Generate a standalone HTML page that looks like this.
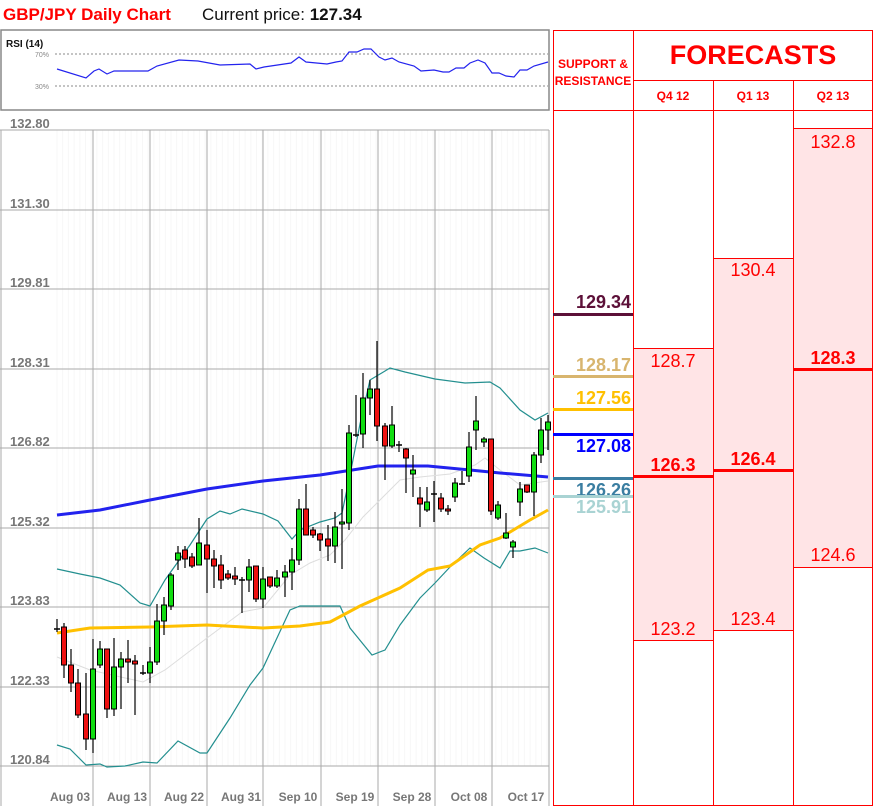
<!DOCTYPE html>
<html><head><meta charset="utf-8"><style>
body{margin:0;width:873px;height:806px;overflow:hidden;background:#fff;font-family:"Liberation Sans",sans-serif;position:relative}
.a{position:absolute}
.pk{position:absolute;background:#ffe4e6;border-top:1px solid #f00;border-bottom:1px solid #f00}
.num{position:absolute;width:80px;text-align:center;color:#f00;font-size:18px}
.b{font-weight:bold}
.ln{position:absolute;height:3px;background:#f00}
.sr{position:absolute;left:553px;width:80px;height:3px}
.srt{position:absolute;left:553px;width:78px;text-align:right;font-size:18px;font-weight:bold}
</style></head><body>
<div class="a" style="left:3px;top:5px;font-size:17px;font-weight:bold;color:#f00">GBP/JPY Daily Chart</div>
<div class="a" style="left:202px;top:5px;font-size:17px;color:#111">Current price: <b>127.34</b></div>
<svg class="a" style="left:0;top:0" width="553" height="806">
<rect x="1" y="30" width="548" height="80" fill="none" stroke="#888" stroke-width="1.5"/>
<text x="6" y="47" font-size="10" font-weight="bold" fill="#111" font-family="Liberation Sans">RSI (14)</text>
<line x1="55" y1="54" x2="548" y2="54" stroke="#888" stroke-dasharray="2,2"/>
<line x1="55" y1="86" x2="548" y2="86" stroke="#888" stroke-dasharray="2,2"/>
<text x="35" y="57" font-size="7" fill="#888">70%</text>
<text x="35" y="89" font-size="7" fill="#888">30%</text>
<polyline fill="none" stroke="#2323ee" stroke-width="1.2" points="57,69 86,78 94,71 99,69 107,74 114,71 148,71 157,66 179,60 198,61 220,65 250,64 256,69 264,67 291,63 299,57 306,62 327,64 336,62 342,61 349,52 357,52 364,49 371,49 379,57 385,60 392,58 399,62 414,66 421,71 434,70 443,72 449,72 456,68 464,68 470,63 478,60 485,63 492,73 499,73 506,76 514,77 520,70 527,70 534,66 548,62"/>
<g id="minor"></g>
<g stroke="#aaa" stroke-width="1">
<line x1="1" y1="130" x2="1" y2="806"/>
<line x1="549" y1="130" x2="549" y2="806"/>
<line x1="93" y1="130" x2="93" y2="806"/><line x1="150" y1="130" x2="150" y2="806"/><line x1="207" y1="130" x2="207" y2="806"/><line x1="263" y1="130" x2="263" y2="806"/><line x1="321" y1="130" x2="321" y2="806"/><line x1="378" y1="130" x2="378" y2="806"/><line x1="435" y1="130" x2="435" y2="806"/><line x1="492" y1="130" x2="492" y2="806"/>
<line x1="0" y1="130" x2="549" y2="130"/><line x1="0" y1="210" x2="549" y2="210"/><line x1="0" y1="289" x2="549" y2="289"/><line x1="0" y1="369" x2="549" y2="369"/><line x1="0" y1="448" x2="549" y2="448"/><line x1="0" y1="528" x2="549" y2="528"/><line x1="0" y1="607" x2="549" y2="607"/><line x1="0" y1="687" x2="549" y2="687"/><line x1="0" y1="766" x2="549" y2="766"/>
</g>
<g font-size="13" font-weight="bold" fill="#777" font-family="Liberation Sans">
<text x="10" y="128">132.80</text><text x="10" y="208">131.30</text><text x="10" y="287">129.81</text><text x="10" y="367">128.31</text><text x="10" y="446">126.82</text><text x="10" y="526">125.32</text><text x="10" y="605">123.83</text><text x="10" y="685">122.33</text><text x="10" y="764">120.84</text>
</g>
<g font-size="12" font-weight="bold" fill="#777" text-anchor="middle" font-family="Liberation Sans">
<text x="70" y="801">Aug 03</text><text x="127" y="801">Aug 13</text><text x="184" y="801">Aug 22</text><text x="241" y="801">Aug 31</text><text x="298" y="801">Sep 10</text><text x="355" y="801">Sep 19</text><text x="412" y="801">Sep 28</text><text x="469" y="801">Oct 08</text><text x="526" y="801">Oct 17</text>
</g>
<polyline fill="none" stroke="#ddd" stroke-width="1" points="57,657 90,670 143,682 165,670 207,638 242,612 263,608 290,575 310,563 330,555 345,540 363,517 400,480 420,477 450,474 475,465 485,458 500,470 520,485 548,481"/>
<polyline fill="none" stroke="#238f8f" stroke-width="1.2" points="57,569 80,574 100,578 120,585 140,603 150,606 165,580 190,545 207,519 220,511 230,514 242,509 263,514 278,521 292,539 300,530 320,522 335,518 342,513 350,475 360,424 370,380 390,368 405,372 435,379 465,383 490,382 500,388 520,410 535,420 548,413"/>
<polyline fill="none" stroke="#238f8f" stroke-width="1.2" points="57,745 70,749 86,765 100,764 107,767 125,766 143,762 157,763 178,741 200,753 207,753 230,718 250,685 263,668 290,610 300,606 340,606 350,628 372,655 385,650 400,625 420,598 435,583 450,567 470,548 484,558 500,568 510,551 520,551 535,548 548,553"/>
<polyline fill="none" stroke="#ffc000" stroke-width="3" points="57,633 90,628 150,627 207,625 263,628 300,626 330,622 360,606 400,588 428,570 450,566 480,545 500,538 530,520 548,510"/>
<polyline fill="none" stroke="#2222ee" stroke-width="3" points="57,515 100,510 150,500 207,489 263,481 320,475 378,466 428,466 470,470 500,473 548,477"/>
<g id="c"></g>
</svg>
<script>
var d=[[57,629,629,619,632],[64,627,665,623,678],[71,665,683,649,692],[78,683,715,669,718],[86,714,739,673,750],[93,739,669,639,753],[100,665,649,641,668],[107,649,709,649,718],[114,709,667,638,716],[121,667,659,652,709],[128,659,662,640,683],[135,661,664,655,715],[143,673,673,665,675],[150,673,662,647,683],[157,662,621,604,665],[164,621,605,597,635],[171,606,575,573,610],[178,560,553,546,570],[185,550,559,546,568],[192,557,566,553,568],[199,565,543,518,565],[207,545,559,530,593],[214,559,566,550,588],[221,565,580,555,589],[228,574,578,570,580],[235,576,579,567,585],[242,580,580,577,613],[249,580,567,559,592],[256,566,599,566,602],[263,599,579,567,608],[270,577,586,577,588],[277,586,578,570,588],[285,577,572,565,597],[292,572,560,548,590],[299,560,509,499,565],[306,509,535,484,535],[313,530,535,527,538],[320,534,540,533,551],[328,539,546,525,561],[335,546,527,512,563],[342,524,522,489,569],[349,523,433,425,530],[356,436,435,395,437],[363,434,398,373,448],[370,398,389,380,415],[377,389,426,341,441],[385,426,446,423,480],[392,446,425,406,448],[399,445,445,441,452],[406,449,458,448,493],[413,474,470,455,497],[420,498,504,487,527],[427,510,502,487,512],[434,494,495,481,522],[441,498,509,493,512],[448,509,511,505,515],[455,497,483,478,502],[462,484,484,471,484],[469,476,447,432,482],[476,430,421,396,450],[484,442,439,437,447],[491,439,511,439,515],[498,518,505,501,520],[506,538,533,513,539],[513,547,542,540,558],[520,502,489,482,516],[527,485,492,485,493],[534,492,455,452,516],[541,455,430,418,463],[548,430,422,415,450]];
var s='';
for(var i=57;i<549;i+=5.7){s+='<line x1="'+i+'" y1="130" x2="'+i+'" y2="766" stroke="#f7f7f7"/>';}
document.getElementById('minor').innerHTML=s;
s='';
d.forEach(function(c){var x=c[0],o=c[1],cl=c[2];s+='<line x1="'+x+'" y1="'+c[3]+'" x2="'+x+'" y2="'+c[4]+'" stroke="#000" stroke-width="1.2"/>';
var t=Math.min(o,cl),h=Math.abs(o-cl);
if(h<1.5){s+='<line x1="'+(x-3)+'" y1="'+t+'" x2="'+(x+3)+'" y2="'+t+'" stroke="#000" stroke-width="1.5"/>';}
else s+='<rect x="'+(x-2.5)+'" y="'+t+'" width="5" height="'+h+'" fill="'+(cl<o?'#11dd11':'#ee1111')+'" stroke="#000" stroke-width="1"/>';});
document.getElementById('c').innerHTML=s;
</script>
<div class="pk" style="left:633px;top:348px;width:80px;height:291px"></div>
<div class="pk" style="left:713px;top:258px;width:80px;height:371px"></div>
<div class="pk" style="left:793px;top:128px;width:80px;height:438px"></div>
<div class="a" style="left:553px;top:30px;width:318px;height:774px;border:1px solid #f00"></div>
<div class="a" style="left:633px;top:30px;width:1px;height:776px;background:#f00"></div>
<div class="a" style="left:713px;top:80px;width:1px;height:726px;background:#f00"></div>
<div class="a" style="left:793px;top:80px;width:1px;height:726px;background:#f00"></div>
<div class="a" style="left:633px;top:80px;width:240px;height:1px;background:#f00"></div>
<div class="a" style="left:553px;top:110px;width:320px;height:1px;background:#f00"></div>
<div class="a b" style="left:633px;top:40px;width:240px;text-align:center;font-size:27px;color:#f00">FORECASTS</div>
<div class="a b" style="left:553px;top:56px;width:80px;text-align:center;font-size:12px;line-height:17px;color:#f00">SUPPORT &amp;<br>RESISTANCE</div>
<div class="a b" style="left:633px;top:89px;width:80px;text-align:center;font-size:12px;color:#f00">Q4 12</div>
<div class="a b" style="left:713px;top:89px;width:80px;text-align:center;font-size:12px;color:#f00">Q1 13</div>
<div class="a b" style="left:793px;top:89px;width:80px;text-align:center;font-size:12px;color:#f00">Q2 13</div>

<div class="sr" style="top:313px;background:#5c1038"></div><div class="srt" style="top:292px;color:#5c1038">129.34</div>
<div class="sr" style="top:375px;background:#d8b56e"></div><div class="srt" style="top:355px;color:#d8b56e">128.17</div>
<div class="sr" style="top:408px;background:#ffc000"></div><div class="srt" style="top:388px;color:#ffc000">127.56</div>
<div class="sr" style="top:433px;background:#0000ff"></div><div class="srt" style="top:436px;color:#0000ff">127.08</div>
<div class="sr" style="top:477px;background:#3b7ea1"></div><div class="srt" style="top:480px;color:#3b7ea1">126.26</div>
<div class="sr" style="top:495px;background:#a9d3d3"></div><div class="srt" style="top:497px;color:#a9d3d3">125.91</div>

<div class="num" style="left:633px;top:351px">128.7</div>
<div class="ln" style="left:633px;top:475px;width:80px"></div><div class="num b" style="left:633px;top:455px">126.3</div>
<div class="num" style="left:633px;top:619px">123.2</div>
<div class="num" style="left:713px;top:260px">130.4</div>
<div class="ln" style="left:713px;top:469px;width:80px"></div><div class="num b" style="left:713px;top:449px">126.4</div>
<div class="num" style="left:713px;top:609px">123.4</div>
<div class="num" style="left:793px;top:132px">132.8</div>
<div class="ln" style="left:793px;top:368px;width:80px"></div><div class="num b" style="left:793px;top:348px">128.3</div>
<div class="num" style="left:793px;top:545px">124.6</div>
</body></html>
